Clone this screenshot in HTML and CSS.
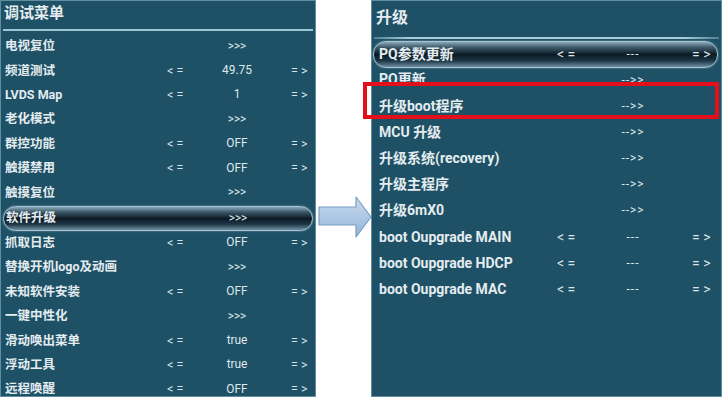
FILE: index.html
```html
<!DOCTYPE html>
<html lang="zh">
<head>
<meta charset="utf-8">
<link rel="stylesheet" href="styles.css">
</head>
<body>
<div class="stage">
  <section class="panel left">
    <div class="title">调试菜单</div>
    <div class="rule"></div>
    <div class="list">
      <div class="row"><span class="lab">电视复位</span><span class="op"></span><span class="val">&gt;&gt;&gt;</span><span class="op2"></span></div>
      <div class="row"><span class="lab">频道测试</span><span class="op">&lt; =</span><span class="val">49.75</span><span class="op2">= &gt;</span></div>
      <div class="row"><span class="lab">LVDS Map</span><span class="op">&lt; =</span><span class="val">1</span><span class="op2">= &gt;</span></div>
      <div class="row"><span class="lab">老化模式</span><span class="op"></span><span class="val">&gt;&gt;&gt;</span><span class="op2"></span></div>
      <div class="row"><span class="lab">群控功能</span><span class="op">&lt; =</span><span class="val">OFF</span><span class="op2">= &gt;</span></div>
      <div class="row"><span class="lab">触摸禁用</span><span class="op">&lt; =</span><span class="val">OFF</span><span class="op2">= &gt;</span></div>
      <div class="row"><span class="lab">触摸复位</span><span class="op"></span><span class="val">&gt;&gt;&gt;</span><span class="op2"></span></div>
      <div class="row sel"><span class="lab">软件升级</span><span class="op"></span><span class="val">&gt;&gt;&gt;</span><span class="op2"></span></div>
      <div class="row"><span class="lab">抓取日志</span><span class="op">&lt; =</span><span class="val">OFF</span><span class="op2">= &gt;</span></div>
      <div class="row"><span class="lab">替换开机logo及动画</span><span class="op"></span><span class="val">&gt;&gt;&gt;</span><span class="op2"></span></div>
      <div class="row"><span class="lab">未知软件安装</span><span class="op">&lt; =</span><span class="val">OFF</span><span class="op2">= &gt;</span></div>
      <div class="row"><span class="lab">一键中性化</span><span class="op"></span><span class="val">&gt;&gt;&gt;</span><span class="op2"></span></div>
      <div class="row"><span class="lab">滑动唤出菜单</span><span class="op">&lt; =</span><span class="val">true</span><span class="op2">= &gt;</span></div>
      <div class="row"><span class="lab">浮动工具</span><span class="op">&lt; =</span><span class="val">true</span><span class="op2">= &gt;</span></div>
      <div class="row"><span class="lab">远程唤醒</span><span class="op">&lt; =</span><span class="val">OFF</span><span class="op2">= &gt;</span></div>
    </div>
  </section>

  <div class="gap">
    <svg class="arrow" width="56" height="46" viewBox="0 0 56 46">
      <defs>
        <linearGradient id="ag" x1="0" y1="0" x2="0" y2="1">
          <stop offset="0" stop-color="#c9dcf0"/>
          <stop offset="1" stop-color="#93b3d8"/>
        </linearGradient>
      </defs>
      <path d="M2 13 H39 V3 L54 23 L39 43 V31 H2 Z" fill="url(#ag)" stroke="#7b9cc6" stroke-width="1.2" stroke-linejoin="round"/>
    </svg>
  </div>

  <section class="panel right">
    <div class="title">升级</div>
    <div class="rule"></div>
    <div class="list">
      <div class="row sel"><span class="lab">PQ参数更新</span><span class="op">&lt; =</span><span class="val dash">---</span><span class="op2">= &gt;</span></div>
      <div class="row"><span class="lab">PQ更新</span><span class="op"></span><span class="val dash">--&gt;&gt;</span><span class="op2"></span></div>
      <div class="row"><span class="lab">升级boot程序</span><span class="op"></span><span class="val dash">--&gt;&gt;</span><span class="op2"></span></div>
      <div class="row"><span class="lab">MCU 升级</span><span class="op"></span><span class="val dash">--&gt;&gt;</span><span class="op2"></span></div>
      <div class="row"><span class="lab">升级系统(recovery)</span><span class="op"></span><span class="val dash">--&gt;&gt;</span><span class="op2"></span></div>
      <div class="row"><span class="lab">升级主程序</span><span class="op"></span><span class="val dash">--&gt;&gt;</span><span class="op2"></span></div>
      <div class="row"><span class="lab">升级6mX0</span><span class="op"></span><span class="val dash">--&gt;&gt;</span><span class="op2"></span></div>
      <div class="row"><span class="lab">boot Oupgrade MAIN</span><span class="op">&lt; =</span><span class="val dash">---</span><span class="op2">= &gt;</span></div>
      <div class="row"><span class="lab">boot Oupgrade HDCP</span><span class="op">&lt; =</span><span class="val dash">---</span><span class="op2">= &gt;</span></div>
      <div class="row"><span class="lab">boot Oupgrade MAC</span><span class="op">&lt; =</span><span class="val dash">---</span><span class="op2">= &gt;</span></div>
    </div>
  </section>

  <div class="mark"></div>
</div>
</body>
</html>
```

FILE: styles.css
```css
* { box-sizing: border-box; }
html, body { margin: 0; padding: 0; background: #ffffff; }
body {
  width: 725px;
  height: 399px;
  overflow: hidden;
  font-family: Roboto, "Noto Sans CJK SC", sans-serif;
  color: #e4ecf0;
}
.stage {
  position: relative;
  display: flex;
  width: 725px;
  height: 399px;
}
.panel {
  background: #1e5165;
  height: 397px;
  overflow: hidden;
  border: 1px solid #5f8ea3;
}
.left { width: 316px; }
.right { width: 351px; }
.gap {
  width: 55px;
  padding-top: 194px;
}
.arrow { display: block; margin-left: 1px; }

.title {
  font-weight: 700;
  white-space: nowrap;
}
.left .title {
  height: 28px;
  line-height: 24px;
  padding-left: 3px;
  font-size: 15px;
}
.right .title {
  height: 36px;
  line-height: 34px;
  padding-left: 4px;
  font-size: 16px;
}
.rule {
  height: 2px;
  margin: 0 2px;
}
.left .rule { background: #9fc6d6; }
.right .rule {
  background: linear-gradient(90deg, rgba(160,198,214,0.4), #a9cbd9 10%, #a9cbd9 90%, rgba(160,198,214,0.4));
}
.list { display: flex; flex-direction: column; }
.left .list { padding-top: 3px; }
.right .list { padding-top: 1px; }

.row {
  display: grid;
  align-items: center;
  white-space: nowrap;
  font-weight: 700;
  line-height: 1.1;
}
.left .row {
  height: 24.4px;
  font-size: 12.5px;
  grid-template-columns: 162px 40px 60px 1fr;
  padding-left: 4px;
}
.right .row {
  height: 26.2px;
  font-size: 14px;
  grid-template-columns: 178px 46px 60px 1fr;
  padding-left: 7px;
}
.val { text-align: center; font-weight: 400; font-size: 0.95em; color: #dfe8ec; }
.val.dash { letter-spacing: 1px; font-size: 0.85em; }
.op { font-weight: 400; color: #d8e3e8; }
.op2 { font-weight: 400; color: #d8e3e8; }
.left .op2 { padding-left: 24px; }
.right .op2 { padding-left: 29px; }

.row.sel {
  border-radius: 13px;
  border: 1px solid #a7c3d1;
  background: linear-gradient(180deg, #8aa8ba 0%, #3c5868 22%, #0b1a24 50%, #1d3645 75%, #6d8ea2 100%);
  box-shadow: 0 0 2px rgba(200,225,235,0.6);
}
.left .row.sel { margin: 1px 2px 0 2px; height: 25px; padding-left: 2px; }
.right .row.sel { margin: 1px 3px 0 1px; height: 27px; padding-left: 5px; }
.right .list .row.sel + .row { margin-top: -1px; }

.mark {
  position: absolute;
  left: 363px;
  top: 82px;
  width: 356px;
  height: 37px;
  border: 4px solid #e3101c;
}
```
